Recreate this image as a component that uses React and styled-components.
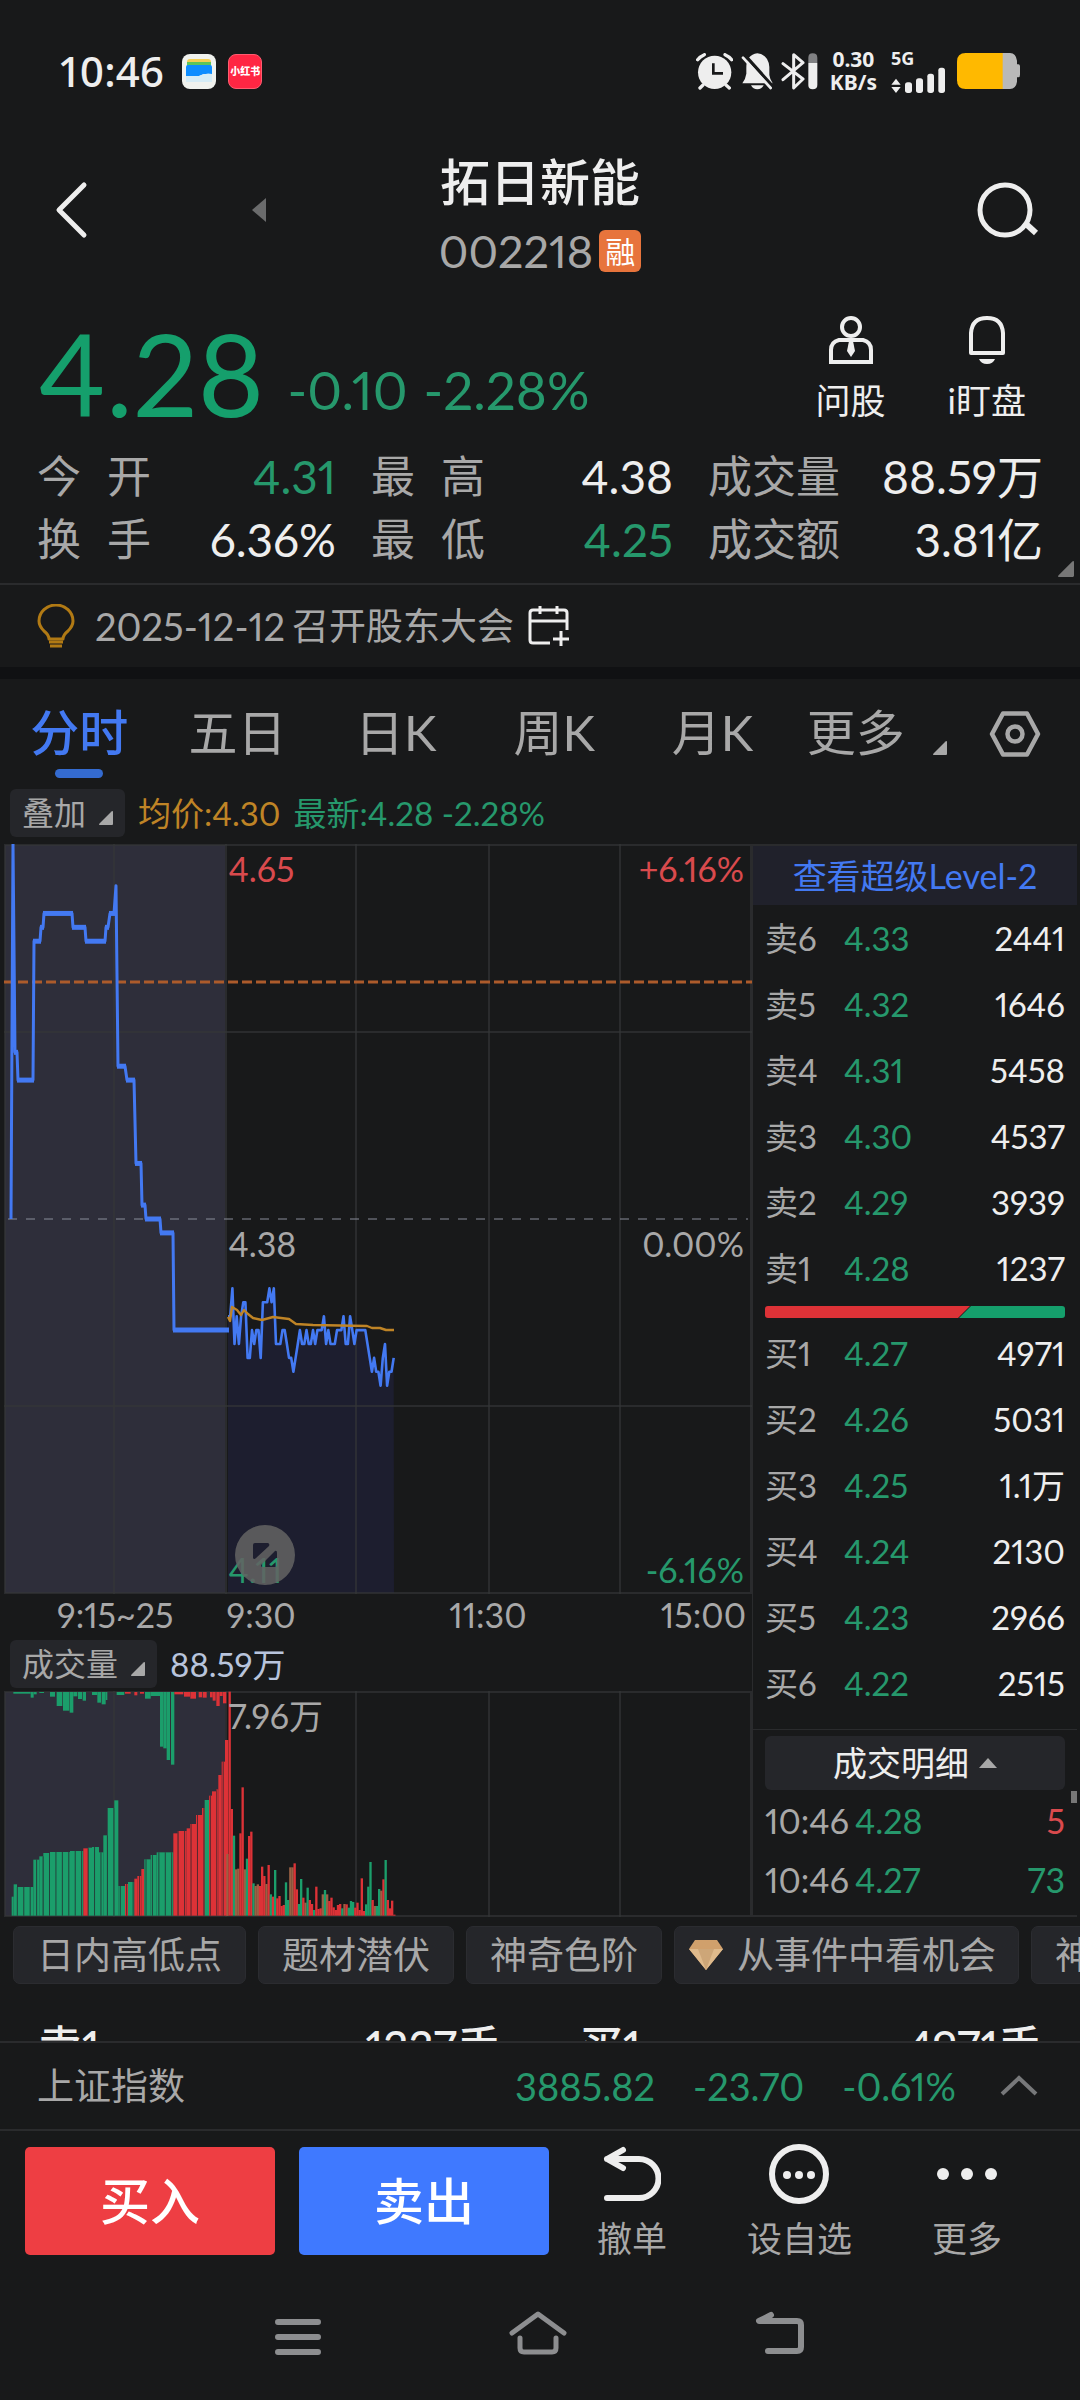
import React from "react";
import styled, { createGlobalStyle, css } from "styled-components";

const c = {
  bg: "#18191a",
  band: "#101113",
  line: "#2a2b2d",
  panel: "#25262a",
  white: "#eeeeee",
  grey: "#a8a8a8",
  green: "#26986c",
  vivid: "#159f6c",
  red: "#d94a4d",
  blue: "#4379f2",
  amber: "#bf8426",
};

const GlobalStyle = createGlobalStyle`
  * { box-sizing: border-box; }
  html { background: ${c.bg}; }
  body {
    margin: 0;
    background: ${c.bg};
    color: ${c.white};
    font-family: Lato, "Noto Sans CJK SC", sans-serif;
    font-variant-numeric: proportional-nums;
    font-size: 34px;
    line-height: 48px;
  }
  button {
    margin: 0;
    padding: 0;
    border: 0;
    background: none;
    color: inherit;
    font: inherit;
    font-variant-numeric: inherit;
    cursor: pointer;
  }
  a { color: inherit; text-decoration: none; }
  svg { display: block; flex: none; }
  table { border-collapse: collapse; }
  td, th { padding: 0; font-weight: 400; text-align: left; }
  dl, dt, dd, h1, p { margin: 0; font-weight: 400; }
`;

const Page = styled.div`
  display: flex;
  flex-direction: column;
  min-height: 100vh;
  overflow: hidden;
`;

/* ---------- status bar ---------- */
const StatusBar = styled.header`
  display: flex;
  align-items: center;
  justify-content: space-between;
  height: 142px;
  padding: 0 60px;
`;
const StatusGroup = styled.div`
  display: flex;
  align-items: center;
  gap: ${(p) => p.$gap}px;
`;
const Clock = styled.time`
  font-size: 42px;
  font-weight: 500;
  font-family: "Noto Sans", sans-serif;
  margin-right: 6px;
`;
const RedBook = styled.span`
  display: grid;
  place-items: center;
  width: 34px;
  height: 35px;
  border: 1px solid #ff5c70;
  border-radius: 8px;
  background: #ff2643;
  color: #fff;
  font-size: 10px;
  font-weight: 900;
  line-height: 12px;
`;
const NetSpeed = styled.span`
  display: grid;
  margin: 0 6px 0 4px;
  text-align: center;
  font: 700 21px/23px "Noto Sans", sans-serif;
`;
const Signal = styled.span`
  display: grid;
  margin-right: 4px;
  font: 700 18px/18px "Noto Sans", sans-serif;
`;

/* ---------- title ---------- */
const TitleBar = styled.div`
  display: grid;
  grid-template-columns: 1fr auto 1fr;
  align-items: center;
  height: 144px;
  padding: 0 40px;
`;
const TitleSide = styled.div`
  display: flex;
  align-items: center;
  justify-content: ${(p) => (p.$end ? "flex-end" : "flex-start")};
  gap: 164px;
  padding: 0 0 8px 14px;
`;
const TitleText = styled.div`
  display: flex;
  flex-direction: column;
  align-items: center;
  padding-top: 6px;
`;
const StockName = styled.h1`
  font-size: 50px;
  line-height: 68px;
  font-weight: 500;
`;
const StockCode = styled.p`
  display: flex;
  align-items: center;
  gap: 6px;
  color: ${c.grey};
  font-size: 45px;
  line-height: 70px;
`;
const MarginBadge = styled.span`
  width: 42px;
  height: 42px;
  border-radius: 6px;
  background: #e7743c;
  color: #fff;
  font-size: 30px;
  line-height: 42px;
  text-align: center;
`;

/* ---------- quote ---------- */
const Quote = styled.section`
  display: flex;
  justify-content: space-between;
  height: 159px;
  padding: 22px 54px 0 38px;
`;
const Price = styled.div`
  display: flex;
  gap: 23px;
  height: 130px;
  color: ${c.vivid};
  font-size: 114px;
  line-height: 130px;
`;
const Change = styled.span`
  display: flex;
  align-self: flex-end;
  gap: 16px;
  padding-bottom: 16px;
  color: ${c.green};
  font-size: 53px;
  line-height: 64px;
`;
const QuoteActions = styled.div`
  display: flex;
  gap: 62px;
  padding-top: 7px;
`;
const IconButton = styled.button`
  display: flex;
  flex-direction: column;
  align-items: center;
  gap: ${(p) => p.$gap || 0}px;
  color: ${(p) => p.$color || c.white};
  font-size: 35px;
  line-height: 48px;
`;
const Stats = styled.dl`
  display: grid;
  grid-template-columns: 299fr 302fr 335fr;
  column-gap: 35px;
  padding: 0 37px;
  position: relative;
  height: 138px;
  align-content: start;
`;
const Stat = styled.div`
  display: flex;
  justify-content: space-between;
  font-size: 44px;
  line-height: 63px;
`;
const StatLabel = styled.dt`
  display: flex;
  justify-content: space-between;
  width: ${(p) => (p.$spread ? "114px" : "auto")};
  color: ${c.grey};
`;
const StatValue = styled.dd`
  color: ${(p) => (p.$down ? c.green : c.white)};
  font-size: 46px;
`;
const Corner = styled.svg`
  width: ${(p) => p.$size || 14}px;
  height: ${(p) => p.$size || 14}px;
  fill: ${(p) => p.$color || c.grey};
`;
const StatsMore = styled.button`
  position: absolute;
  right: 6px;
  bottom: 6px;
`;
const Notice = styled.a`
  display: flex;
  align-items: center;
  height: 84px;
  padding: 0 37px;
  border-top: 2px solid ${c.line};
  color: ${c.grey};
  font-size: 37px;
`;
const NoticeText = styled.span`
  display: flex;
  gap: 7px;
  margin: 0 14px 0 20px;
`;
const NoticeDate = styled.time`
  font-size: 38px;
`;
const Band = styled.div`
  height: 12px;
  background: ${c.band};
`;

/* ---------- period tabs ---------- */
const Tabs = styled.nav`
  display: grid;
  grid-template-columns: repeat(6, minmax(0, 1fr)) 130px;
  align-items: center;
  justify-items: center;
  height: 110px;
`;
const Tab = styled.button`
  display: flex;
  flex-direction: column;
  align-items: center;
  height: 110px;
  padding-top: 18px;
  color: ${(p) => (p.$active ? c.blue : c.grey)};
  font-size: 49px;
  font-weight: ${(p) => (p.$active ? 500 : 400)};
  line-height: 70px;
  ${(p) =>
    p.$active &&
    css`
      &::after {
        content: "";
        width: 48px;
        height: 9px;
        margin-top: 2px;
        border-radius: 5px;
        background: #346bd0;
      }
    `}
`;
const MoreTab = styled(Tab)`
  flex-direction: row;
  align-items: flex-start;
  gap: 28px;
  padding-left: 12px;
  svg { margin-top: 44px; }
`;

/* ---------- chart area ---------- */
const Legend = styled.div`
  display: flex;
  align-items: flex-start;
  gap: 13px;
  height: ${(p) => p.$height}px;
  padding-left: ${(p) => p.$inset}px;
  color: ${(p) => p.$color || c.grey};
  font-size: 33px;
`;
const Picker = styled.button`
  display: flex;
  align-items: center;
  gap: 13px;
  height: 48px;
  padding: 0 12px;
  border-radius: 6px;
  background: ${c.panel};
  color: ${c.grey};
  font-size: 32px;
  svg { margin-top: 10px; }
`;
const Tone = styled.span`
  color: ${(p) => p.$color};
`;
const Board = styled.section`
  display: grid;
  grid-template-columns: minmax(0, 1fr) 328px;
  padding-left: 4px;
`;
const Charts = styled.div`
  display: flex;
  flex-direction: column;
`;
const Plot = styled.div`
  display: grid;
  > * { grid-area: 1 / 1; min-width: 0; }
`;
const PlotSvg = styled.svg`
  width: 100%;
  height: ${(p) => p.$height}px;
`;
const Scale = styled.div`
  display: flex;
  flex-direction: column;
  justify-content: space-between;
  padding: 1px 8px 0 30%;
`;
const ScaleRow = styled.div`
  display: flex;
  justify-content: space-between;
  color: ${(p) => p.$color || c.grey};
`;
const MidScale = styled(ScaleRow)`
  margin-top: 48px;
`;
const Expand = styled.button`
  place-self: end start;
  margin: 0 0 9px 231px;
  opacity: 0.86;
`;
const TimeAxis = styled.div`
  display: grid;
  grid-template-columns: 30% 30% 1fr auto;
  height: 46px;
  padding-right: 6px;
  color: ${c.grey};
  line-height: 42px;
`;
const AxisLabel = styled.span`
  text-align: ${(p) => p.$align || "left"};
`;

/* ---------- order book ---------- */
const Book = styled.div`
  border-left: 1px solid ${c.line};
  display: flex;
  flex-direction: column;
  margin-right: 3px;
`;
const LevelLink = styled.a`
  height: 61px;
  border-top: 2px solid ${c.line};
  background: #20212b;
  color: ${c.blue};
  line-height: 60px;
  text-align: center;
`;
const Orders = styled.table`
  width: 300px;
  margin: ${(p) => p.$margin || "0 12px"};
  table-layout: fixed;
  font-size: ${(p) => p.$font || 33}px;
  tr { height: ${(p) => p.$row}px; }
  th { width: ${(p) => p.$first}px; color: ${c.grey}; }
  td { color: ${c.green}; }
  td:last-child { text-align: right; }
`;
const Qty = styled.td`
  && { color: ${(p) => p.$color || c.white}; }
`;
const Ratio = styled.svg`
  width: 300px;
  height: 12px;
  margin: 5px 12px 2px;
  border-radius: 3px;
`;
const TradesButton = styled.button`
  display: flex;
  align-items: center;
  justify-content: center;
  gap: 10px;
  height: 54px;
  margin: 6px 12px 0;
  border-radius: 6px;
  background: ${c.panel};
`;
const Trades = styled.div`
  position: relative;
  margin-top: 13px;
  flex: 1;
  border-top: 1px solid ${c.line};
  border-bottom: 2px solid ${c.line};
`;
const ScrollThumb = styled.span`
  position: absolute;
  top: 61px;
  right: 0;
  width: 6px;
  height: 12px;
  background: #777;
`;
const TradesBody = styled.div`
  display: flex;
  flex-direction: column;
`;

/* ---------- tags and footer ---------- */
const Chips = styled.div`
  display: flex;
  gap: 12px;
  height: 68px;
  padding: 9px 0 0 13px;
  overflow: hidden;
`;
const Chip = styled.button`
  display: flex;
  flex: none;
  align-items: center;
  gap: 14px;
  height: 58px;
  padding: 0 ${(p) => (p.$gem ? "22px 0 14px" : "23px")};
  border: 1px solid #2b2c30;
  border-radius: 7px;
  background: ${c.panel};
  color: ${c.grey};
  font-size: 37px;
`;
const Peek = styled.div`
  display: grid;
  grid-template-columns: 1fr 1fr;
  gap: 78px;
  height: 56px;
  padding: 37px 38px 0;
  overflow: hidden;
  font-size: 44px;
  font-weight: 500;
`;
const PeekPair = styled.div`
  display: flex;
  justify-content: space-between;
`;
const IndexBar = styled.a`
  display: flex;
  align-items: center;
  gap: 38px;
  height: 88px;
  padding: 0 42px 0 37px;
  border-top: 2px solid ${c.line};
  color: ${c.green};
  font-size: 38px;
`;
const IndexName = styled.span`
  flex: 1;
  color: ${c.grey};
  font-size: 37px;
`;
const Actions = styled.div`
  display: grid;
  grid-template-columns: 250fr 250fr 483fr;
  column-gap: 24px;
  height: 144px;
  padding: 13px 24px 0 25px;
  border-top: 2px solid ${c.line};
`;
const TradeButton = styled.button`
  height: 108px;
  margin-top: 3px;
  border-radius: 5px;
  background: ${(p) => p.$color};
  color: #fff;
  font-size: 50px;
  font-weight: 500;
`;
const Tools = styled.div`
  display: flex;
  justify-content: space-between;
  align-items: flex-start;
  padding: 0 54px 0 24px;
`;
const SystemNav = styled.nav`
  display: flex;
  justify-content: center;
  align-items: center;
  gap: 188px;
  height: 120px;
`;

/* ---------- data ---------- */
const stats = [
  ["今开", "4.31", true],
  ["最高", "4.38", false],
  ["成交量", "88.59万", false],
  ["换手", "6.36%", false],
  ["最低", "4.25", true],
  ["成交额", "3.81亿", false],
];
const asks = [
  ["卖6", "4.33", "2441"],
  ["卖5", "4.32", "1646"],
  ["卖4", "4.31", "5458"],
  ["卖3", "4.30", "4537"],
  ["卖2", "4.29", "3939"],
  ["卖1", "4.28", "1237"],
];
const bids = [
  ["买1", "4.27", "4971"],
  ["买2", "4.26", "5031"],
  ["买3", "4.25", "1.1万"],
  ["买4", "4.24", "2130"],
  ["买5", "4.23", "2966"],
  ["买6", "4.22", "2515"],
];

// Opening auction: x position and price in cents.
const auction = [
  [7, 438], [9, 465], [11, 450], [13, 450], [14, 448], [29, 448], [30, 458], [36, 458], [37, 459],
  [39, 459], [40, 460], [68, 460], [69, 459], [81, 459], [82, 458], [101, 458], [102, 459],
  [104, 459], [106, 460], [110, 460], [112, 462], [114, 449], [121, 449], [123, 448], [130, 448],
  [132, 442], [137, 442], [138, 439], [141, 439], [142, 438], [156, 438], [157, 437], [169, 437],
  [170, 430], [224, 430],
];
// One price per minute from 9:30, cents above 4.00.
const minutes = [
  31, 31, 33, 29, 31, 29, 31, 32, 32, 28, 28, 30, 29, 30, 30, 28, 32, 32, 32, 33, 32, 33, 29, 29,
  29, 30, 30, 29, 28, 28, 27, 28, 29, 30, 29, 29, 30, 29, 29, 30, 29, 30, 30, 30, 31, 29, 30, 29,
  29, 29, 30, 30, 30, 31, 29, 29, 31, 30, 29, 30, 30, 30, 30, 30, 29, 28, 27, 28, 27, 27, 26, 28,
  29, 26, 27, 27, 28,
];
const average =
  "224,473 226,477 228,463 233,466 237,471 240,466 244,470 249,474 258,476 269,473 285,475 292,480 309,481 363,482 368,484 376,484 382,486 390,486";

const priceY = (cents) => ((465 - cents) / 54) * 750;
const auctionLine = auction.map(([x, p]) => `${x},${priceY(p).toFixed(1)}`).join(" ");
const minuteLine = minutes
  .map((p, i) => `${(224 + i * 2.18).toFixed(1)},${priceY(400 + p).toFixed(1)}`)
  .join(" ");

// Auction volume: start, end, top edge, side (g = sell, r = buy).
const matched = [
  [35, 41, 950, "g"], [41, 51, 913, "g"], [51, 100, 921, "g"], [100, 118, 839, "g"],
  [118, 130, 829, "g"], [130, 150, 819, "g"], [150, 210, 816, "g"], [210, 250, 813, "g"],
  [250, 265, 805, "r"], [265, 276, 803, "g"], [276, 297, 801, "g"], [297, 310, 817, "g"],
  [310, 323, 766, "g"], [323, 343, 684, "g"], [343, 355, 661, "g"], [355, 375, 918, "g"],
  [375, 384, 912, "r"], [384, 403, 906, "g"], [403, 412, 896, "r"], [412, 424, 888, "r"],
  [424, 433, 867, "r"], [433, 452, 838, "g"], [452, 470, 825, "g"], [470, 520, 817, "g"],
  [520, 533, 760, "r"], [533, 560, 753, "r"], [560, 570, 745, "r"], [570, 588, 732, "r"],
  [588, 606, 705, "r"], [606, 614, 684, "r"], [614, 627, 660, "g"], [627, 636, 647, "r"],
  [636, 648, 634, "r"], [648, 655, 628, "r"], [655, 665, 585, "r"], [665, 675, 545, "r"],
  [675, 685, 480, "r"],
];
const unmatched = [
  [40, 92, 341, "g"], [92, 101, 353, "g"], [101, 110, 343, "g"], [118, 132, 339, "g"],
  [150, 165, 350, "g"], [170, 187, 378, "g"], [189, 208, 392, "g"], [209, 220, 398, "g"],
  [220, 232, 349, "g"], [234, 246, 357, "g"], [248, 258, 362, "g"], [276, 292, 345, "g"],
  [292, 303, 368, "g"], [305, 317, 373, "g"], [317, 322, 360, "g"], [350, 373, 345, "g"],
  [375, 392, 341, "r"], [403, 412, 346, "r"], [420, 432, 341, "r"], [435, 452, 356, "g"],
  [452, 480, 348, "g"], [480, 490, 500, "g"], [490, 500, 505, "g"], [500, 510, 540, "g"],
  [513, 523, 554, "g"], [523, 550, 343, "r"], [552, 570, 350, "r"], [571, 588, 356, "r"],
  [596, 606, 352, "r"], [608, 620, 353, "r"], [630, 638, 352, "r"], [638, 647, 362, "r"],
  [649, 659, 378, "r"], [659, 668, 348, "r"], [669, 679, 370, "r"],
];
// Minute volume: top edge and side (m = balanced).
const volume =
  "822m 335r 687r 767g 868m 866m 760r 622r 868m 836g 768r 755r 910g 918m 913m 918r 860r 888r 912m 855r 943g 950r 870g 955r 948r 978r 975r 907g 960g 862m 862m 850r 928r 972g 897g 953r 968m 923g 960r 972r 990g 920r 987r 985r 943m 930g 943m 963r 953r 982r 990r 975r 972r 985g 972m 973r 983g 963g 966g 983r 968r 990r 895r 993r 973g 920g 846g 960r 978m 978g 927g 932m 898r 840g 960r 985r 962r 1004r".split(" ");
const side = { g: "#1b9e6b", r: "#dd3237", m: "#9a6044" };

/* ---------- pieces ---------- */
const CornerMark = ({ size, color }) => (
  <Corner viewBox="0 0 14 14" $size={size} $color={color} aria-hidden="true">
    <path d="M12.5 0.5Q14 -0.5 14 1V13Q14 14 13 14H1Q-0.5 14 0.5 12.5Z" />
  </Corner>
);

function StatusIcons() {
  return (
    <StatusGroup $gap={8}>
      <svg width="37" height="37" viewBox="45 68 111 111">
        <circle cx="101" cy="126" r="50" fill={c.white} />
        <g fill="none" stroke={c.white} strokeWidth="10" strokeLinecap="round">
          <path d="M50 88Q58 78 70 73M152 88Q144 78 132 73M66 164L57 173M135 164L145 173" />
        </g>
        <path d="M97 99V129H126" fill="none" stroke={c.bg} strokeWidth="8" />
      </svg>
      <svg width="32" height="37" viewBox="181 68 96 111">
        <path d="M197 112Q197 73 230 69Q263 73 266 110V134Q268 148 276 159H185Q195 145 197 130Z" fill={c.white} />
        <path d="M211 165H249Q243 177 230 177Q217 177 211 165Z" fill={c.white} />
        <path d="M193 75L276 168" stroke={c.bg} strokeWidth="10" />
        <path d="M187 82L270 173" stroke={c.white} strokeWidth="8" strokeLinecap="round" />
      </svg>
      <svg width="37" height="37" viewBox="302 68 111 111">
        <path d="M308 100L368 146L340 173V73L368 97L308 148" fill="none" stroke={c.white} strokeWidth="9" strokeLinejoin="round" strokeLinecap="round" />
        <path d="M384 98V82Q384 69 397 69Q411 69 411 82V98Z" fill="#808183" />
        <path d="M384 98H411V164Q411 177 397 177Q384 177 384 164Z" fill={c.white} />
      </svg>
      <NetSpeed>
        <span>0.30</span>
        <span>KB/s</span>
      </NetSpeed>
      <Signal>
        <span>5G</span>
        <svg width="54" height="26" viewBox="638 103 162 78">
          <g fill={c.white}>
            <path d="M653 138L667 156H639ZM653 181L667 163H639Z" />
            <rect x="680" y="149" width="21" height="32" rx="8" />
            <rect x="713" y="137" width="21" height="44" rx="8" />
            <rect x="747" y="123" width="20" height="58" rx="8" />
            <rect x="780" y="105" width="20" height="76" rx="8" />
          </g>
        </svg>
      </Signal>
      <svg width="63" height="36" viewBox="831 69 189 108">
        <path d="M965 69H990Q1008 70 1011 92V103H1015Q1020 103 1020 109V134Q1020 142 1015 142H1011V155Q1008 176 990 177H965Z" fill="#b9b9b9" />
        <path d="M968 69V177H857Q831 177 831 151V95Q831 69 857 69Z" fill="#ffb900" />
      </svg>
    </StatusGroup>
  );
}

function GridLines({ vertical, horizontal, width, height, stroke = 2 }) {
  return (
    <g stroke="#343638" strokeOpacity="0.65" strokeWidth={stroke} fill="none">
      <rect x={stroke / 2} y={stroke / 2} width={width - stroke} height={height - stroke} />
      {vertical.map((x) => <path key={x} d={`M${x} 0V${height}`} />)}
      {horizontal.map((y) => <path key={y} d={`M0 ${y}H${width}`} />)}
    </g>
  );
}

function PriceChart() {
  return (
    <Plot>
      <PlotSvg $height={750} viewBox="0 0 748 750" preserveAspectRatio="none" role="img" aria-label="分时走势">
        <rect x="1" y="1" width="220" height="748" fill="#2e2e3a" />
        <polygon points={`224,749 ${minuteLine} 390,749`} fill="#1d1e2f" />
        <GridLines vertical={[110, 222, 352, 485, 616]} horizontal={[188, 562]} width={748} height={750} />
        <path d="M0 138H748" stroke="#ac5b2b" strokeWidth="3" strokeDasharray="10 4" />
        <path d="M4 375H744" stroke="#888d99" strokeWidth="1" strokeDasharray="9 9" />
        <g fill="none" strokeLinejoin="round">
          <polyline points={auctionLine} stroke={c.blue} strokeWidth="3" />
          <g stroke={c.blue} strokeWidth="5">
            {auction.slice(1).map(([x, p], i) =>
              auction[i][1] === p ? <path key={x} d={`M${auction[i][0] - 1} ${priceY(p)}H${x + 1}`} /> : null
            )}
          </g>
          <polyline points={minuteLine} stroke={c.blue} strokeWidth="2.6" />
          <polyline points={average} stroke={c.amber} strokeWidth="2.4" />
        </g>
      </PlotSvg>
      <Scale>
        <ScaleRow $color={c.red}><span>4.65</span><span>+6.16%</span></ScaleRow>
        <MidScale><span>4.38</span><span>0.00%</span></MidScale>
        <ScaleRow $color={c.green}><span>4.11</span><span>-6.16%</span></ScaleRow>
      </Scale>
      <Expand aria-label="全屏">
        <svg width="60" height="60" viewBox="0 0 60 60">
          <path
            fillRule="evenodd"
            fill="#636363"
            d="M30 0A30 30 0 1 1 30 60A30 30 0 1 1 30 0ZM20 18Q18 18 18 20V33Q19 35 21 33L34 21Q35 19 33 18ZM40 26L27 39Q25 41 27 42H40Q42 42 42 40V28Q42 25 40 26Z"
          />
        </svg>
      </Expand>
    </Plot>
  );
}

function VolumeChart() {
  return (
    <Plot>
      <PlotSvg $height={226} viewBox="12 333 2244 678" preserveAspectRatio="none" role="img" aria-label="成交量">
        <rect x="15" y="336" width="661" height="672" fill="#2e2e3a" />
        <g transform="translate(12 333)">
          <GridLines vertical={[330, 666, 1056, 1455, 1848]} horizontal={[]} width={2244} height={678} stroke={6} />
        </g>
        {unmatched.map(([a, b, y, s]) => (
          <rect key={a} x={a} y="336" width={b - a} height={y - 336} fill={side[s]} />
        ))}
        {matched.map(([a, b, y, s]) => (
          <rect key={a} x={a} y={y} width={b - a} height={1007 - y} fill={side[s]} />
        ))}
        <g stroke="#26262e" strokeOpacity="0.75" strokeWidth="3">
          {Array.from({ length: 33 }, (_, i) => 52 + i * 19.3).map((x) => (
            <path key={x} d={`M${x} ${(matched.find(([a, b]) => x >= a && x < b) || [0, 0, 1007])[2]}V1007`} />
          ))}
        </g>
        {volume.map((v, i) => {
          const y = parseInt(v, 10);
          return <rect key={i} x={679 + i * 6.5} y={y} width="7" height={1007 - y} fill={side[v.slice(-1)]} />;
        })}
      </PlotSvg>
      <Scale>
        <ScaleRow><span>7.96万</span></ScaleRow>
      </Scale>
    </Plot>
  );
}

const OrderRows = ({ rows }) => (
  <Orders $row={66} $first={79}>
    <tbody>
      {rows.map(([label, price, qty]) => (
        <tr key={label}>
          <th scope="row">{label}</th>
          <td>{price}</td>
          <Qty>{qty}</Qty>
        </tr>
      ))}
    </tbody>
  </Orders>
);

export default function App() {
  return (
    <Page>
      <GlobalStyle />
      <StatusBar>
        <StatusGroup $gap={12}>
          <Clock>10:46</Clock>
          <svg width="34" height="35" viewBox="0 0 34 35">
            <rect width="34" height="35" rx="8" fill="#f0f2ee" />
            <rect x="5" y="5" width="24" height="8" rx="3" fill="#f4cf54" />
            <rect x="5" y="8" width="24" height="6" fill="#5dc55a" />
            <path d="M4 13Q4 11 6 11H28Q30 11 30 13V20Q22 19 17 22H4Z" fill="#0d8dff" />
            <path d="M4 22H17Q22 19 30 20V28H4Z" fill="#d5ecf6" />
          </svg>
          <RedBook>小红书</RedBook>
        </StatusGroup>
        <StatusIcons />
      </StatusBar>

      <TitleBar>
        <TitleSide>
          <button aria-label="返回">
            <svg width="34" height="60" viewBox="0 0 34 60" fill="none" stroke={c.white} strokeWidth="5" strokeLinecap="round" strokeLinejoin="round">
              <path d="M30 5L5 30L30 55" />
            </svg>
          </button>
          <button aria-label="上一只">
            <svg width="14" height="24" viewBox="0 0 14 24" fill="#6a6b6c"><path d="M14 0V24L0 12Z" /></svg>
          </button>
        </TitleSide>
        <TitleText>
          <StockName>拓日新能</StockName>
          <StockCode>002218<MarginBadge>融</MarginBadge></StockCode>
        </TitleText>
        <TitleSide $end>
          <button aria-label="搜索">
            <svg width="64" height="60" viewBox="0 0 64 60" fill="none" stroke={c.white} strokeWidth="5">
              <circle cx="29" cy="30" r="25" />
              <path d="M49 43L60 53" strokeWidth="6" />
            </svg>
          </button>
        </TitleSide>
      </TitleBar>

      <Quote>
        <Price>
          4.28
          <Change><span>-0.10</span><span>-2.28%</span></Change>
        </Price>
        <QuoteActions>
          <IconButton $gap={11}>
            <svg width="46" height="50" viewBox="0 0 46 50" fill="none" stroke={c.white} strokeWidth="4">
              <circle cx="23" cy="12" r="9" />
              <path d="M11 25H35Q43 27 43 35V47H3V35Q3 27 11 25Z" />
              <path d="M21 26H25L27 36L23 42L19 36Z" fill={c.white} stroke="none" />
            </svg>
            问股
          </IconButton>
          <IconButton $gap={11}>
            <svg width="46" height="50" viewBox="0 0 46 50" fill="none" stroke={c.white} strokeWidth="4">
              <path d="M7 38V18Q8 3 23 3Q38 3 39 18V38Z" strokeLinejoin="round" />
              <path d="M15 44H31Q29 49 23 49Q17 49 15 44Z" fill={c.white} stroke="none" />
            </svg>
            i盯盘
          </IconButton>
        </QuoteActions>
      </Quote>

      <Stats>
        {stats.map(([label, value, down]) => (
          <Stat key={label}>
            <StatLabel $spread={label.length === 2}>
              {label.length === 2 ? [...label].map((ch) => <span key={ch}>{ch}</span>) : label}
            </StatLabel>
            <StatValue $down={down}>{value}</StatValue>
          </Stat>
        ))}
        <StatsMore aria-label="展开"><CornerMark size={16} color="#777" /></StatsMore>
      </Stats>

      <Notice href="#meeting">
        <svg width="38" height="44" viewBox="0 0 38 44" fill="none" stroke="#b17a14" strokeWidth="3">
          <path d="M12 35Q12 31 7 27Q2 22 2 17A17 16 0 0 1 36 17Q36 22 31 27Q26 31 26 35Z" strokeLinejoin="round" />
          <path d="M12 38H26M13 42H25" />
        </svg>
        <NoticeText><NoticeDate>2025-12-12</NoticeDate><span>召开股东大会</span></NoticeText>
        <svg width="42" height="42" viewBox="0 0 42 42" fill="none" stroke={c.white} strokeWidth="3">
          <path d="M39 25V8Q39 5 36 5H5Q2 5 2 8V35Q2 38 5 38H22M2 16H39M12 1V9M29 1V9M33 26V41M25 34H41" />
        </svg>
      </Notice>
      <Band />

      <Tabs>
        <Tab $active>分时</Tab>
        <Tab>五日</Tab>
        <Tab>日K</Tab>
        <Tab>周K</Tab>
        <Tab>月K</Tab>
        <MoreTab>更多<CornerMark /></MoreTab>
        <button aria-label="设置">
          <svg width="52" height="48" viewBox="0 0 52 48" fill="none" stroke={c.grey} strokeWidth="4.5" strokeLinejoin="round">
            <path d="M14 3.5H38L49 24L38 44.5H14L3 24Z" />
            <circle cx="26" cy="24" r="7.5" />
          </svg>
        </button>
      </Tabs>

      <Legend $height={55} $inset={10}>
        <Picker>叠加<CornerMark /></Picker>
        <Tone $color={c.amber}>均价:4.30</Tone>
        <Tone $color={c.green}>最新:4.28 -2.28%</Tone>
      </Legend>

      <Board>
        <Charts>
          <PriceChart />
          <TimeAxis>
            <AxisLabel $align="center">9:15~25</AxisLabel>
            <AxisLabel>9:30</AxisLabel>
            <AxisLabel>11:30</AxisLabel>
            <AxisLabel>15:00</AxisLabel>
          </TimeAxis>
          <Legend $height={51} $inset={6} $color="#b8c4dc">
            <Picker>成交量<CornerMark /></Picker>
            88.59万
          </Legend>
          <VolumeChart />
        </Charts>

        <Book>
          <LevelLink href="#level2">查看超级Level-2</LevelLink>
          <OrderRows rows={asks} />
          <Ratio viewBox="0 0 300 12" preserveAspectRatio="none">
            <path d="M0 0H205L193 12H0Z" fill="#dd3237" />
            <path d="M206 0H300V12H194Z" fill="#159f6c" />
          </Ratio>
          <OrderRows rows={bids} />
          <Trades>
            <TradesBody>
              <TradesButton>
                成交明细
                <svg width="18" height="10" viewBox="0 0 18 10" fill={c.grey}><path d="M9 0L18 10H0Z" /></svg>
              </TradesButton>
              <Orders $row={59} $first={90} $font={34} $margin="1px 12px 0">
                <tbody>
                  <tr><th scope="row">10:46</th><td>4.28</td><Qty $color={c.red}>5</Qty></tr>
                  <tr><th scope="row">10:46</th><td>4.27</td><Qty $color={c.green}>73</Qty></tr>
                </tbody>
              </Orders>
            </TradesBody>
            <ScrollThumb />
          </Trades>
        </Book>
      </Board>

      <Chips>
        <Chip>日内高低点</Chip>
        <Chip>题材潜伏</Chip>
        <Chip>神奇色阶</Chip>
        <Chip $gem>
          <svg width="34" height="30" viewBox="0 0 34 30">
            <path d="M6 0H28L34 9L17 30L0 9Z" fill="#d0a06c" />
            <path d="M0 9H34L17 30Z" fill="#dfba8c" />
            <path d="M9 9H25L17 30Z" fill="#cda678" />
          </svg>
          从事件中看机会
        </Chip>
        <Chip>神奇电波</Chip>
      </Chips>

      <Peek>
        <PeekPair><span>卖1</span><span>1237手</span></PeekPair>
        <PeekPair><span>买1</span><span>4971手</span></PeekPair>
      </Peek>

      <IndexBar href="#index">
        <IndexName>上证指数</IndexName>
        <span>3885.82</span>
        <span>-23.70</span>
        <span>-0.61%</span>
        <svg width="44" height="24" viewBox="2 0 44 24" fill="none" stroke="#77787a" strokeWidth="4">
          <path d="M10 20L27 4L44 20" />
        </svg>
      </IndexBar>

      <Actions>
        <TradeButton $color="#ee3e43">买入</TradeButton>
        <TradeButton $color="#3f79ff">卖出</TradeButton>
        <Tools>
          <IconButton $gap={10} $color={c.grey}>
            <svg width="58" height="60" viewBox="0 -2 58 60" fill="none" stroke={c.white} strokeWidth="6" strokeLinecap="round" strokeLinejoin="round">
              <path d="M20 4L4 13L20 22M4 13H36A19 19 0 0 1 36 52H4" />
            </svg>
            撤单
          </IconButton>
          <IconButton $gap={10} $color={c.grey}>
            <svg width="60" height="60" viewBox="0 0 60 60" fill={c.white}>
              <circle cx="30" cy="30" r="27" fill="none" stroke={c.white} strokeWidth="6" />
              <circle cx="18" cy="31" r="4" /><circle cx="30" cy="31" r="4" /><circle cx="42" cy="31" r="4" />
            </svg>
            设自选
          </IconButton>
          <IconButton $gap={10} $color={c.grey}>
            <svg width="60" height="60" viewBox="0 0 60 60" fill={c.white}>
              <circle cx="6" cy="30" r="6" /><circle cx="30" cy="30" r="6" /><circle cx="54" cy="30" r="6" />
            </svg>
            更多
          </IconButton>
        </Tools>
      </Actions>

      <SystemNav>
        <button aria-label="最近任务">
          <svg width="46" height="44" viewBox="0 0 46 44" stroke="#8d8e90" strokeWidth="6" strokeLinecap="round">
            <path d="M3 11H43M3 26H43M3 41H43" />
          </svg>
        </button>
        <button aria-label="主屏幕">
          <svg width="58" height="46" viewBox="0 0 58 46" fill="none" stroke="#8d8e90" strokeWidth="5" strokeLinecap="round" strokeLinejoin="round">
            <path d="M3 23L29 4L55 23M11 28V38Q11 42 15 42H43Q47 42 47 38V28" />
          </svg>
        </button>
        <button aria-label="返回上一级">
          <svg width="50" height="44" viewBox="0 0 50 44" fill="none" stroke="#8d8e90" strokeWidth="6" strokeLinecap="round" strokeLinejoin="round">
            <path d="M16 4L4 10H42Q46 10 46 14V36Q46 40 42 40H13" />
          </svg>
        </button>
      </SystemNav>
    </Page>
  );
}
